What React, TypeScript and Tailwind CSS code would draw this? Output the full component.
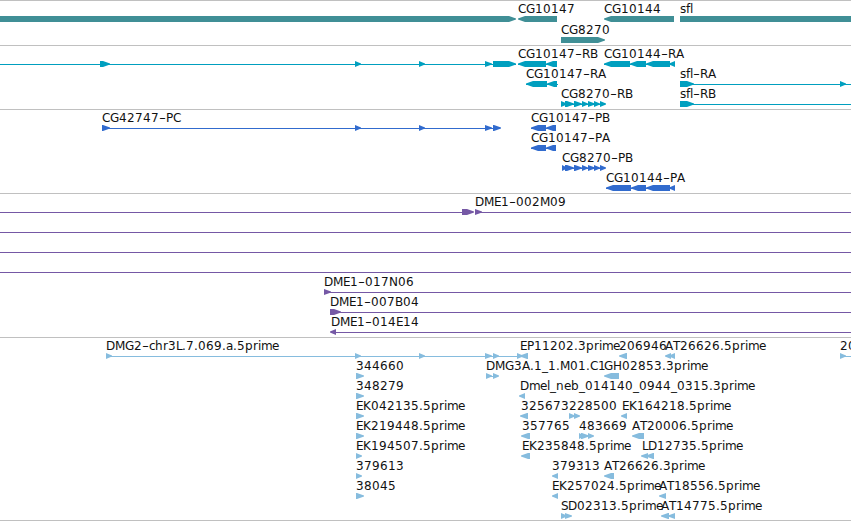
type Dir = 'r' | 'l' | 'b';
type Exon = [start: number, end: number, dir: Dir];

interface Feature {
  label?: string;
  at?: number;
  line?: [number, number];
  exons?: Exon[];
}

interface TrackData {
  name: string;
  height: string;
  color: string;
  pitch: number;
  rows: Feature[][];
}

// glyph advances in whole pixels, everything else is 8
const ADVANCE: Record<string, number> = {
  G: 9, D: 9, H: 9, N: 9, M: 10, P: 7, E: 7, L: 6, T: 7, S: 7,
  '-': 7, '.': 4, _: 6,
  a: 7, c: 6, e: 7, f: 4, i: 3, l: 3, m: 11, r: 5, s: 6,
};

const tracks: TrackData[] = [
  {
    name: 'genes',
    height: 'h-[45px]',
    color: 'text-[#408f96]',
    pitch: 21,
    rows: [
      [
        { exons: [[-5, 516, 'r']] },
        { label: 'CG10147', at: 518, exons: [[518, 557, 'l']] },
        { label: 'CG10144', at: 604, exons: [[604, 674, 'l']] },
        { label: 'sfl', at: 680, exons: [[680, 851, 'b']] },
      ],
      [{ label: 'CG8270', at: 561, exons: [[561, 605, 'r']] }],
    ],
  },
  {
    name: 'transcripts',
    height: 'h-[64px]',
    color: 'text-[#009fbf]',
    pitch: 20,
    rows: [
      [
        {
          line: [0, 516],
          exons: [[100, 110, 'r'], [355, 361, 'r'], [419, 425, 'r'], [485, 492, 'r'], [493, 516, 'r']],
        },
        { label: 'CG10147-RB', at: 518, line: [518, 557], exons: [[518, 546, 'l'], [546, 557, 'l']] },
        {
          label: 'CG10144-RA',
          at: 604,
          line: [604, 675],
          exons: [[604, 630, 'l'], [630, 646, 'l'], [646, 670, 'l'], [669, 675, 'l']],
        },
      ],
      [
        { label: 'CG10147-RA', at: 526, line: [526, 558], exons: [[526, 547, 'l'], [547, 557, 'l']] },
        { label: 'sfl-RA', at: 680, line: [680, 851], exons: [[680, 694, 'r'], [840, 846, 'r']] },
      ],
      [
        {
          label: 'CG8270-RB',
          at: 561,
          line: [561, 605],
          exons: [[561, 567, 'r'], [565, 574, 'r'], [574, 582, 'r'], [582, 588, 'r'], [588, 595, 'r'], [594, 600, 'r'], [600, 606, 'r']],
        },
        { label: 'sfl-RB', at: 680, line: [680, 851], exons: [[680, 694, 'r']] },
      ],
    ],
  },
  {
    name: 'proteins',
    height: 'h-[84px]',
    color: 'text-[#316bce]',
    pitch: 20,
    rows: [
      [
        {
          label: 'CG42747-PC',
          at: 102,
          line: [102, 500],
          exons: [[102, 110, 'r'], [355, 361, 'r'], [419, 425, 'r'], [485, 492, 'r'], [493, 501, 'r']],
        },
        { label: 'CG10147-PB', at: 531, line: [531, 556], exons: [[531, 546, 'l'], [546, 556, 'l']] },
      ],
      [{ label: 'CG10147-PA', at: 531, line: [531, 556], exons: [[531, 546, 'l'], [546, 556, 'l']] }],
      [
        {
          label: 'CG8270-PB',
          at: 562,
          line: [562, 605],
          exons: [[562, 567, 'r'], [565, 574, 'r'], [574, 582, 'r'], [582, 588, 'r'], [588, 595, 'r'], [594, 600, 'r'], [600, 606, 'r']],
        },
      ],
      [
        {
          label: 'CG10144-PA',
          at: 606,
          line: [606, 675],
          exons: [[606, 631, 'l'], [631, 646, 'l'], [646, 670, 'l'], [669, 675, 'l']],
        },
      ],
    ],
  },
  {
    name: 'clones',
    height: 'h-[144px]',
    color: 'text-[#7558a5]',
    pitch: 20,
    rows: [
      [
        { line: [0, 473], exons: [[462, 474, 'r']] },
        { label: 'DME1-002M09', at: 475, line: [475, 851], exons: [[475, 482, 'r']] },
      ],
      [{ line: [0, 851] }],
      [{ line: [0, 851] }],
      [{ line: [0, 851] }],
      [{ label: 'DME1-017N06', at: 324, line: [324, 851], exons: [[324, 331, 'r']] }],
      [{ label: 'DME1-007B04', at: 330, line: [330, 851], exons: [[330, 341, 'r']] }],
      [{ label: 'DME1-014E14', at: 331, line: [331, 851], exons: [[330, 336, 'l']] }],
    ],
  },
  {
    name: 'ests',
    height: 'h-[183px]',
    color: 'text-[#86bcde]',
    pitch: 20,
    rows: [
      [
        {
          label: 'DMG2-chr3L.7.069.a.5prime',
          at: 106,
          line: [106, 522],
          exons: [[106, 112, 'r'], [355, 361, 'r'], [419, 425, 'r'], [485, 492, 'r'], [493, 499, 'r'], [517, 523, 'r']],
        },
        { label: 'EP11202.3prime', at: 520, exons: [[520, 528, 'l']] },
        { label: '206946', at: 619, exons: [[619, 627, 'l']] },
        { label: 'AT26626.5prime', at: 665, exons: [[665, 671, 'l'], [669, 675, 'l']] },
        { label: '20', at: 840, line: [840, 851], exons: [[840, 846, 'r']] },
      ],
      [
        { label: '344660', at: 356, exons: [[356, 364, 'r']] },
        { label: 'DMG3A.1_1.M01.C1', at: 486, line: [486, 498], exons: [[486, 492, 'r'], [493, 499, 'r']] },
        { label: 'GH02853.3prime', at: 604, exons: [[604, 619, 'l']] },
      ],
      [
        { label: '348279', at: 356, exons: [[356, 364, 'r']] },
        { label: 'Dmel_neb_014140_0944_0315.3prime', at: 520, exons: [[519, 525, 'l']] },
      ],
      [
        { label: 'EK042135.5prime', at: 356, exons: [[356, 364, 'r']] },
        { label: '325673', at: 521, exons: [[520, 528, 'l']] },
        { label: '228500', at: 569, exons: [[569, 575, 'r'], [574, 580, 'r']] },
        { label: 'EK164218.5prime', at: 622, exons: [[621, 627, 'l']] },
      ],
      [
        { label: 'EK219448.5prime', at: 356, exons: [[356, 364, 'r']] },
        { label: '357765', at: 522, exons: [[521, 530, 'l']] },
        { label: '483669', at: 579, exons: [[579, 584, 'r'], [581, 589, 'r'], [588, 594, 'r']] },
        { label: 'AT20006.5prime', at: 632, exons: [[632, 644, 'l']] },
      ],
      [
        { label: 'EK194507.5prime', at: 356, exons: [[356, 362, 'r']] },
        { label: 'EK235848.5prime', at: 522, exons: [[521, 530, 'l']] },
        { label: 'LD12735.5prime', at: 642, exons: [[641, 648, 'l'], [646, 654, 'l']] },
      ],
      [
        { label: '379613', at: 356, exons: [[356, 362, 'r']] },
        { label: '379313', at: 552, exons: [[552, 558, 'l']] },
        { label: 'AT26626.3prime', at: 604, exons: [[604, 614, 'l']] },
      ],
      [
        { label: '38045', at: 356, exons: [[356, 364, 'r']] },
        { label: 'EK257024.5prime', at: 552, exons: [[552, 558, 'l']] },
        { label: 'AT18556.5prime', at: 659, exons: [[659, 666, 'l']] },
      ],
      [
        { label: 'SD02313.5prime', at: 561, exons: [[561, 567, 'r'], [565, 572, 'r']] },
        { label: 'AT14775.5prime', at: 661, exons: [[661, 669, 'l'], [668, 675, 'l']] },
      ],
    ],
  },
];

// splits a label at its hyphens, with an x position for every glyph
function labelParts(text: string, start: number) {
  let x = start;
  return text.split(/(-)/).map((part) => {
    const xs = part.split('').map((ch) => {
      const pos = x;
      x += ADVANCE[ch] ?? 8;
      return pos;
    });
    return { part, xs: xs.join(' ') };
  });
}

function exonPoints([start, end, dir]: Exon, y: number) {
  const head = Math.min(7, end - start);
  if (dir === 'b') {
    return `${start},${y} ${end},${y} ${end},${y + 6} ${start},${y + 6}`;
  }
  const tip = dir === 'r' ? end : start;
  const back = dir === 'r' ? start : end;
  const s = dir === 'r' ? -1 : 1;
  const neck = tip + s * head;
  const shoulder = tip + s * head * 0.5;
  return [
    [back, y],
    [neck, y],
    [shoulder, y + 1.2],
    [tip, y + 2.6],
    [tip, y + 3.4],
    [shoulder, y + 4.8],
    [neck, y + 6],
    [back, y + 6],
  ]
    .map((p) => p.join(','))
    .join(' ');
}

function Label({ text, x, y }: { text: string; x: number; y: number }) {
  return (
    <text y={y} className="fill-[#111]">
      {labelParts(text, x).map(({ part, xs }, i) =>
        part === '-' ? (
          <tspan key={i} x={xs} textLength={7} lengthAdjust="spacingAndGlyphs">
            -
          </tspan>
        ) : (
          <tspan key={i} x={xs}>
            {part}
          </tspan>
        )
      )}
    </text>
  );
}

function FeatureGlyph({ feature, top }: { feature: Feature; top: number }) {
  const { label, at = 0, line, exons = [] } = feature;
  return (
    <g>
      {line && <rect x={line[0]} y={top + 18} width={line[1] - line[0]} height={1} fill="currentColor" />}
      {exons.map((exon, i) => (
        <polygon key={i} points={exonPoints(exon, top + 15)} fill="currentColor" />
      ))}
      {label && <Label text={label} x={at} y={top + 12} />}
    </g>
  );
}

function Track({ track }: { track: TrackData }) {
  return (
    <section className={`${track.height} ${track.color} w-full shrink-0 border-t border-[#c0c0c0]`}>
      <svg className="block h-full w-full text-[12px]">
        {track.rows.map((row, r) =>
          row.map((feature, i) => <FeatureGlyph key={`${r}-${i}`} feature={feature} top={r * track.pitch} />)
        )}
      </svg>
    </section>
  );
}

export default function App() {
  return (
    <main className="flex h-[521px] w-[851px] flex-col overflow-hidden border-b border-[#c0c0c0] bg-white font-['DejaVu_Sans',sans-serif]">
      {tracks.map((track) => (
        <Track key={track.name} track={track} />
      ))}
    </main>
  );
}
